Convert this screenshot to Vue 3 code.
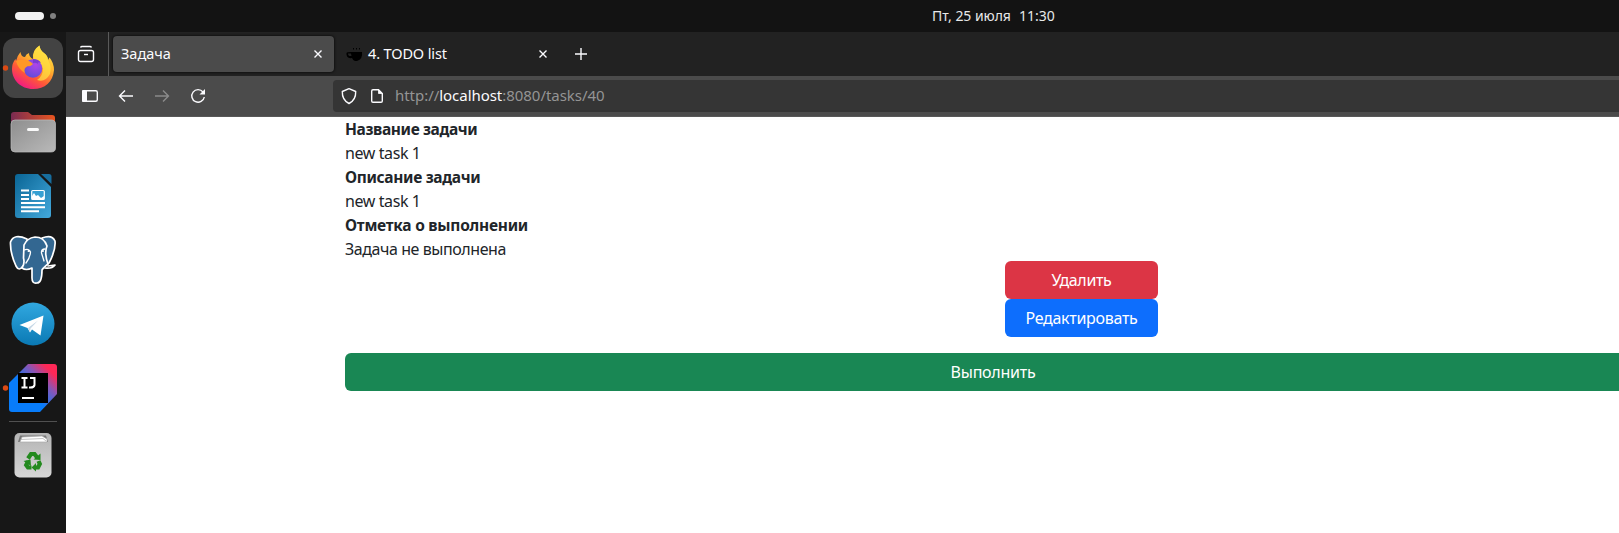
<script setup>
const fields = [
  { label: 'Название задачи', value: 'new task 1', k: 'a', v: 'n' },
  { label: 'Описание задачи', value: 'new task 1', k: 'b', v: 'n' },
  { label: 'Отметка о выполнении', value: 'Задача не выполнена', k: 'c', v: 'd' },
]
</script>

<template>
  <div class="desktop">
    <header class="topbar">
      <i class="pill"></i><i class="dot"></i>
      <div class="clock"><span class="date">Пт, 25 июля</span><span class="time">11:30</span></div>
    </header>
    <div class="main">
      <svg class="dock" width="66" height="501" viewBox="0 32 66 501">
        <defs>
          <linearGradient id="fx" x1=".85" y1="0" x2=".25" y2="1"><stop offset="0" stop-color="#fff04a" /><stop offset=".4" stop-color="#ffb02e" /><stop offset=".68" stop-color="#ff5a36" /><stop offset="1" stop-color="#f0148a" /></linearGradient>
          <radialGradient id="globe" cx=".65" cy=".3" r=".8"><stop offset="0" stop-color="#b044e8" /><stop offset="1" stop-color="#5a4ed8" /></radialGradient>
          <linearGradient id="fold"><stop offset="0" stop-color="#7a2b52" /><stop offset="1" stop-color="#e9551f" /></linearGradient>
          <linearGradient id="front" x1="0" y1="0" x2="1" y2="1"><stop offset="0" stop-color="#8e8e8e" /><stop offset="1" stop-color="#b9b9b9" /></linearGradient>
          <linearGradient id="doc" x1="0" y1="0" x2="1" y2="1"><stop offset="0" stop-color="#0a6595" /><stop offset="1" stop-color="#43a9dc" /></linearGradient>
          <linearGradient id="tg" x2="0" y2="1"><stop offset="0" stop-color="#31a8e0" /><stop offset="1" stop-color="#0a79b4" /></linearGradient>
          <linearGradient id="ij" x1="0" y1="1" x2="1" y2="0"><stop offset=".42" stop-color="#087cfa" /><stop offset=".68" stop-color="#8a55b5" /><stop offset=".86" stop-color="#fe2857" /></linearGradient>
          <linearGradient id="bin" x2="0" y2="1"><stop offset="0" stop-color="#b4b4b4" /><stop offset="1" stop-color="#d6d6d6" /></linearGradient>
        </defs>
        <rect x="3" y="38" width="60" height="60" rx="12" fill="#434343" />
        <circle cx="5.500" cy="68" r="2.700" fill="#dc4a14" />
        <path d="M20.500 52 Q21 57 25 57 Q26 54 29 53 Q29 57 33 59 Q32 50 39.500 45.500 Q40 50 44 53 Q48 56 48 60 L49.500 57.500 Q54 63 54 70 C53 82 45 89 33 89 C21 89 12 80 12 69 Q12 63 15.500 59 L16 61 Q17 56 20.500 52Z" fill="url(#fx)" />
        <path d="M39.500 45.500 Q31 52 34 60 Q42 62 43 69 Q43 76 37 80 Q45 83 50 74 Q52 66 48 60 Q48 56 44 53 Q40 50 39.500 45.500Z" fill="#ffe141" opacity=".72" />
        <circle cx="33" cy="68.500" r="9.300" fill="url(#globe)" />
        <path d="M16 61 Q19 59 25 60 Q29 60 33 64 Q30 67 28 66 Q23 68 25 73 Q18 69 16 61Z" fill="#ff9826" />
        <path d="M33 59 Q39 59 41 63 Q37 61 38 64 Q36 62 33 63Z" fill="#7a3bd2" />
        <path d="M11 122 V115 Q11 112 14 112 H28 L32 115 H52 Q55 115 55 118 V123Z" fill="url(#fold)" />
        <path d="M11 124 Q11 120 15 120 H51 Q55.500 120 55.500 124 V148 Q55.500 152 51 152 H15 Q11 152 11 148Z" fill="url(#front)" stroke="#bdbdbd" stroke-width=".7" />
        <rect x="27" y="128" width="12" height="3" rx="1.500" fill="#fafafa" />
        <path d="M18 174 H38 L51 187 V215 Q51 218 48 218 H18 Q15 218 15 215 V177 Q15 174 18 174Z" fill="url(#doc)" />
        <path d="M41 174 H49 Q51.500 174 51.500 176.500 V184Z" fill="#176d9d" />
        <path d="M21 190.500H29 M21 195H29 M21 199H29 M21 203H45 M21 207.200H45 M21 211.200H39" stroke="#fff" stroke-width="2" />
        <rect x="31.700" y="190.500" width="12.600" height="9" rx="1" fill="#37a0d2" stroke="#fff" stroke-width="1.200" />
        <path d="M32 199V196L34 193L36 196L38 195L41 198L44 196V199Z" fill="#fff" />
        <g stroke="#fff" stroke-width="1.700" stroke-linejoin="round" stroke-linecap="round" fill="#336791">
          <path d="M42 238 Q52 234 55 241 Q56 250 49 263 Q43 269 39 264Z" />
          <path d="M27 239 Q14 233 10.500 242 Q10 253 16 266 Q19 272 23 266 L27 260Z" />
          <path d="M24 245 Q27 238 35 237 Q44 237 47 246 Q44 253 48 264 Q43 268 42 270 Q42 283 37 283 Q32 284 32 278 V268 Q26 271 22 268 Q25 264 23.500 258Z" />
          <path d="M48 266 L55 265 Q52 269 45 268" fill="none" />
          <path d="M24 250 Q29 248 30.500 252 Q30 258 26 263 M45 249 Q41 249 41.500 253 L44 261" fill="none" stroke-width="1.300" />
          <path d="M29 251H28.500 M43 251H42.800" stroke-width="2" />
        </g>
        <circle cx="33" cy="324" r="21.500" fill="url(#tg)" />
        <path d="M19.500 325 L43.500 315.500 L40.500 335.500 L32 329.500 L30 332.500 L27.500 328Z" fill="#fff" />
        <path d="M28 328 L38 320.500 L30.500 328.500 L30 332Z" fill="#c6d8e6" />
        <path d="M28 364 H54 Q57 364 57 367 V394 L40 412 H12 Q9 412 9 409 V383Z" fill="url(#ij)" />
        <rect x="18" y="373" width="30" height="30" fill="#000" />
        <path d="M21.500 378H27.500 M24.500 378V387 M21.500 387.500H27.500 M30 378H34.500V385 Q34 388 29 387.500 M22 398H34" fill="none" stroke="#fff" stroke-width="2" />
        <circle cx="5.500" cy="388" r="2.700" fill="#dc4a14" />
        <path d="M9 421.500H57" stroke="#505050" />
        <rect x="14.500" y="433" width="37" height="44.500" rx="5" fill="url(#bin)" />
        <path d="M18 442 L20 435.500 H46 L48 442Z" fill="#777" />
        <path d="M20 442 L22 437 L42 436 L47 439 V442Z" fill="#fff" stroke="#aaa" stroke-width=".7" />
        <path d="M20.500 439.500 L43 438.500 L46 441" fill="none" stroke="#aaa" stroke-width=".7" />
        <g fill="none" stroke="#238a1e" stroke-width="4.200">
          <path d="M28 458.500 L31 454 H34.500 L37.500 458" />
          <path d="M38.500 461 L39.800 464 L38 467.500 H34" />
          <path d="M31.500 467.500 H28 L26.200 465 L28 461.500" />
        </g>
        <path d="M33.500 459.500L40.500 460 40.500 453.500Z M36 463 L31.500 467.500 36 471.500Z M23.500 461 L30.500 459.500 31 466Z" fill="#238a1e" />
      </svg>

      <div class="browser">
        <div class="tabs">
          <div class="recent">
            <svg width="18" height="18" viewBox="0 0 18 18"><path d="M3.500 2.500Q4 1.500 5 1.500H13Q14 1.500 14.500 2.500" /><rect x="1.500" y="5.500" width="15" height="11" rx="2" /><path d="M7 9.500H11" /></svg>
          </div>
          <div class="tab active"><span class="t1">Задача</span>
            <svg class="x" width="10" height="10" viewBox="0 0 10 10"><path d="M1.500 1.500L8.500 8.500M8.500 1.500L1.500 8.500" /></svg>
          </div>
          <div class="tab second">
            <svg class="cup" width="17" height="15" viewBox="0 0 17 15"><path d="M5 5H16Q17 12 11 14H9Q7 13.500 6 11Q0 12 .5 6Q1 5 5 5ZM5 6.500H2Q2 9.500 5.500 9Z" fill="#000" fill-rule="evenodd" /><path d="M7.500 1V3M10.500 1V3M13.500 1V3" stroke="#000" stroke-dasharray="1 .5" /></svg>
            <span class="t2">4. TODO list</span>
            <svg class="x" width="10" height="10" viewBox="0 0 10 10"><path d="M1.500 1.500L8.500 8.500M8.500 1.500L1.500 8.500" /></svg>
          </div>
          <svg class="plus" width="14" height="14" viewBox="0 0 14 14"><path d="M7 1V13M1 7H13" /></svg>
        </div>
        <div class="toolbar">
          <svg class="nav" width="150" height="40" viewBox="66 76 150 40">
            <rect x="82.700" y="90.700" width="14.600" height="10.600" rx="1.500" /><rect x="82" y="90" width="5" height="12" rx="1" fill="#fbfbfe" stroke="none" />
            <path d="M133 96H119.500M125 90.500L119.500 96L125 101.500" />
            <path d="M155 96H168.500M163 90.500L168.500 96L163 101.500" stroke="#8b8b8b" />
            <path d="M203 92A6.300 6.300 0 1 0 204.300 97" /><path d="M205 89V94.500H199.500Z" fill="#fbfbfe" stroke="none" />
          </svg>
          <div class="url">
            <svg width="54" height="32" viewBox="333 80 54 32"><path d="M349 88.700L355.700 91.500Q356 100 349 103.500Q342 100 342.300 91.500Z" stroke-linejoin="round" /><path d="M373 89.700H378.500L382.300 93.500V101Q382.300 102.300 381 102.300H373Q371.700 102.300 371.700 101V91Q371.700 89.700 373 89.700Z" /><path d="M378.500 89.700V93.500H382.300Z" fill="#fbfbfe" stroke-width=".8" /></svg>
            <span class="addr">http://<b>localhost</b>:8080/tasks/40</span>
          </div>
        </div>
        <main class="page">
          <template v-for="f in fields" :key="f.label">
            <div class="row"><strong :class="f.k">{{ f.label }}</strong></div>
            <div class="row"><span :class="f.v">{{ f.value }}</span></div>
          </template>
          <div class="actions">
            <button class="btn red"><span class="s1">Удалить</span></button>
            <button class="btn blue"><span class="s2">Редактировать</span></button>
          </div>
          <button class="btn green"><span class="s3">Выполнить</span></button>
        </main>
      </div>
    </div>
  </div>
</template>

<style>
body { margin: 0; overflow: hidden; }
</style>
<style scoped>
.desktop { width: 1619px; height: 533px; overflow: hidden; background: #171717; font-family: "Noto Sans", sans-serif; display: flex; flex-direction: column; }
span, strong { white-space: nowrap; }
.topbar { height: 32px; flex: none; background: #131313; display: flex; align-items: center; padding-left: 15px; }
.pill { width: 29px; height: 8px; border-radius: 4px; background: #f2f2f2; }
.dot { width: 6px; height: 6px; border-radius: 3px; background: #808080; margin-left: 6px; }
.clock { margin-left: 876px; display: flex; color: #e8e8e8; font-size: 14px; line-height: 20px; }
.date { width: 87px; letter-spacing: -.05px; }
.main { display: flex; height: 501px; }
.dock { flex: none; display: block; }
.browser { width: 1553px; flex: none; }
.browser svg { fill: none; stroke: #fbfbfe; stroke-width: 1.400; flex: none; }
.tabs { height: 44px; background: #222; display: flex; align-items: center; }
.recent { width: 42px; height: 44px; border-right: 1px solid #5a5a5a; display: flex; align-items: center; }
.recent svg { margin-left: 11px; }
.tab { height: 36px; display: flex; align-items: center; box-sizing: border-box; color: #fbfbfe; font-size: 14.500px; }
.tab span { padding-bottom: 2px; }
.t2 { letter-spacing: -.13px; }
.active { width: 221px; margin-left: 4px; padding: 0 11px 0 8px; background: #4b4b4b; border-radius: 4px; box-shadow: 0 0 3px #000; }
.tab .x { margin-left: auto; }
.second { width: 214px; padding-left: 12px; }
.cup { margin-right: 5px; }
.second .cup { stroke-width: 1; stroke: none; }
.plus { margin-left: 26px; }
.toolbar { height: 41px; box-sizing: border-box; background: #4b4b4b; border-bottom: 1px solid #585858; display: flex; }
.nav { flex: none; margin-right: 117px; }
.url { margin-top: 4px; height: 32px; flex: 1; border-radius: 4px 0 0 4px; background: #353535; display: flex; align-items: center; }
.addr { margin-left: 8px; padding-bottom: 2px; font-size: 15px; letter-spacing: -.04px; color: #949494; }
.addr b { font-weight: 400; color: #fbfbfe; }
.page { height: 416px; background: #fff; padding-left: 279px; color: #212529; font-size: 16px; line-height: 24px; overflow: hidden; }
.row { height: 24px; }
strong { font-size: 15.500px; }
.a { letter-spacing: -.37px; }
.b { letter-spacing: -.33px; }
.c { letter-spacing: -.24px; }
.n { letter-spacing: -.4px; }
.d { letter-spacing: -.43px; }
.s1 { letter-spacing: -.35px; }
.s2 { letter-spacing: -.3px; }
.s3 { letter-spacing: -.25px; }
.actions { width: 153px; margin-left: 660px; display: flex; flex-direction: column; }
.btn { display: block; height: 38px; border: 0; padding: 0; border-radius: 6px; color: #fff; font: 16px/24px "Noto Sans", sans-serif; }
.red { background: #dc3545; }
.blue { background: #0d6efd; }
.green { background: #198754; width: 1296px; margin-top: 16px; }
</style>
